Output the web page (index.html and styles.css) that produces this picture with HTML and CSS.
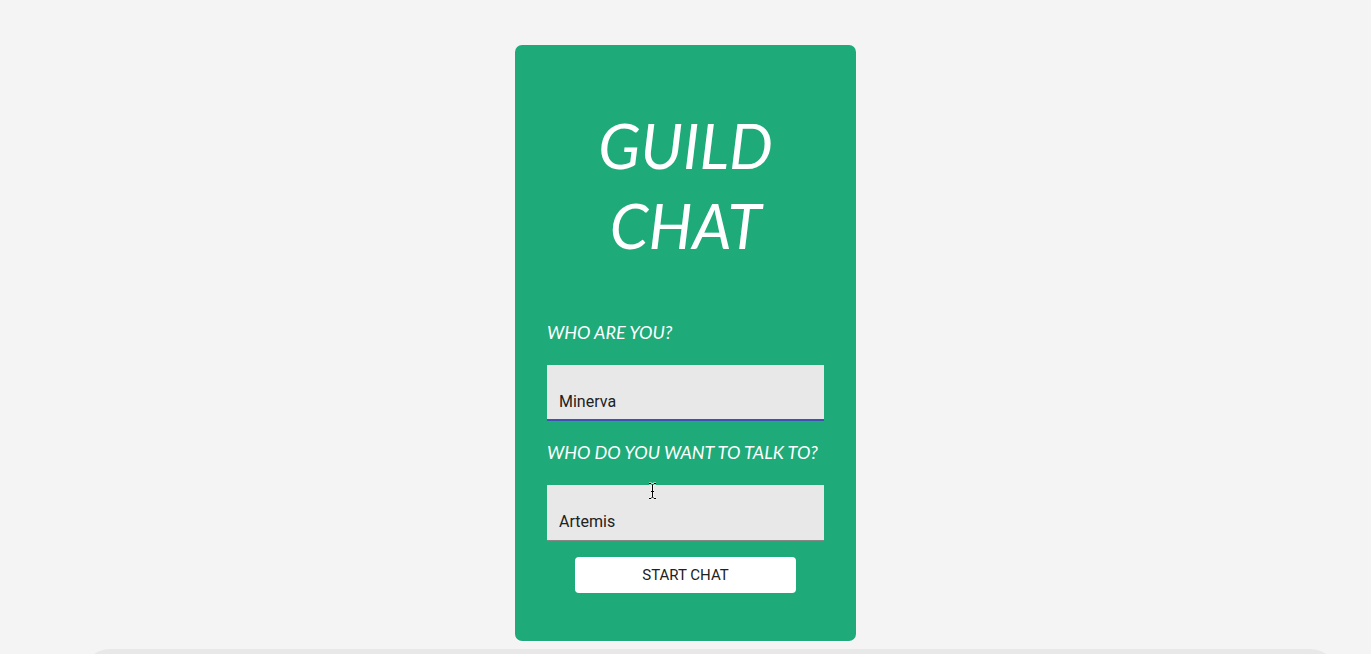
FILE: index.html
```html
<!DOCTYPE html>
<html lang="en">
<head>
<meta charset="utf-8">
<meta name="viewport" content="width=device-width, initial-scale=1">
<title>Guild Chat</title>
<link rel="stylesheet" href="styles.css">
</head>
<body>
<main class="page">
  <form class="card">
    <h1 class="title">GUILD<br>CHAT</h1>
    <label class="label" for="me">WHO ARE YOU?</label>
    <input class="field field-active" id="me" type="text" value="Minerva">
    <label class="label" for="them">WHO DO YOU WANT TO TALK TO?</label>
    <div class="field-wrap">
      <input class="field" id="them" type="text" value="Artemis">
      <svg class="pointer" width="9" height="18" viewBox="0 0 9 18" aria-hidden="true">
        <path class="pointer-halo" d="M1 1.5H3L4.5 3L6 1.5H8M4.5 3V15M1 16.5H3L4.5 15L6 16.5H8M3 9.5H6"/>
        <path class="pointer-line" d="M1 1.5H3L4.5 3L6 1.5H8M4.5 3V15M1 16.5H3L4.5 15L6 16.5H8M3 9.5H6"/>
      </svg>
    </div>
    <button class="start" type="button">START CHAT</button>
  </form>
  <section class="sheet" aria-label="Conversation"></section>
</main>
</body>
</html>
```
FILE: styles.css
```css
* {
  box-sizing: border-box;
}

body {
  margin: 0;
  background: #f4f4f4;
  font-family: Roboto, "Liberation Sans", sans-serif;
  color: #212121;
}

.page {
  display: flex;
  flex-direction: column;
  height: 100vh;
  padding-top: 45px;
  overflow: hidden;
}

.card {
  display: flex;
  flex-direction: column;
  flex-shrink: 0;
  width: 100%;
  max-width: 341px;
  margin: 0 auto;
  padding: 60px 32px 48px;
  border-radius: 7px;
  background: #1eaa79;
  box-shadow: 0 1px 0 #fff;
}

.title,
.label {
  color: #fff;
  font-family: "Rock Salt", Lato, sans-serif;
  font-style: italic;
}

.title {
  margin: 0 0 55px;
  font-size: 62px;
  font-weight: 400;
  line-height: 80px;
  text-align: center;
}

.label {
  margin-bottom: 21px;
  font-size: 18px;
  line-height: 24px;
  white-space: nowrap;
}

.field {
  display: block;
  width: 100%;
  height: 56px;
  padding: 22px 12px 4px;
  border: 0;
  border-bottom: 1px solid #868686;
  border-radius: 0;
  outline: 0;
  background: #e8e8e8;
  color: #212121;
  font: 16px/24px Roboto, "Liberation Sans", sans-serif;
}

.field-active {
  margin-bottom: 19px;
  border-bottom: 2px solid #3f51b5;
}

.field-wrap {
  position: relative;
}

.pointer {
  position: absolute;
  top: -3px;
  left: 101px;
  overflow: visible;
  pointer-events: none;
  fill: none;
}

.pointer-halo {
  stroke: #fff;
  stroke-width: 2px;
}

.pointer-line {
  stroke: #000;
  stroke-width: 1px;
}

.start {
  align-self: center;
  width: 80%;
  height: 36px;
  margin-top: 16px;
  border: 0;
  border-radius: 4px;
  background: #fff;
  color: #212121;
  font: 15px/24px Roboto, "Liberation Sans", sans-serif;
}

.sheet {
  flex: 1 0 60px;
  margin: 8px 33px 0 82px;
  border-radius: 28px 28px 0 0;
  background: #e8e8e8;
}
```
